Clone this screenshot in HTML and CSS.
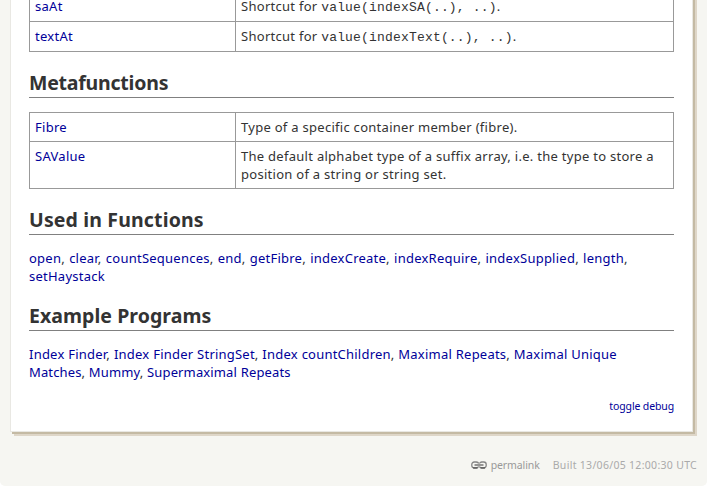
FILE: index.html
```
<!DOCTYPE html>
<html lang="en">
<head>
<meta charset="utf-8">
<title>Index</title>
<link rel="stylesheet" href="styles.css">
</head>
<body>
<div class="page">
  <main class="panel">
    <table class="members first">
      <tr class="code-row"><td class="name"><a>saAt</a></td><td><span class="lead">Shortcut for </span><code>value(indexSA(..), ..)</code>.</td></tr>
      <tr class="code-row"><td class="name"><a>textAt</a></td><td><span class="lead">Shortcut for </span><code>value(indexText(..), ..)</code>.</td></tr>
    </table>
    <h2 class="meta">Metafunctions</h2>
    <table class="members">
      <tr><td class="name"><a>Fibre</a></td><td>Type of a specific container member (fibre).</td></tr>
      <tr><td class="name"><a>SAValue</a></td><td>The default alphabet type of a suffix array, i.e. the type to store a<br>position of a string or string set.</td></tr>
    </table>
    <h2>Used in Functions</h2>
    <p class="functions"><a>open</a>, <a>clear</a>, <a>countSequences</a>, <a>end</a>, <a>getFibre</a>, <a>indexCreate</a>, <a>indexRequire</a>, <a>indexSupplied</a>, <a>length</a>,<br><a>setHaystack</a></p>
    <h2 class="examples">Example Programs</h2>
    <p class="programs"><a>Index Finder</a>, <a>Index Finder StringSet</a>, <a>Index countChildren</a>, <a>Maximal Repeats</a>, <a>Maximal Unique</a><br><span class="tight"><a>Matches</a>, <a>Mummy</a>, <a>Supermaximal Repeats</a></span></p>
    <div class="debug"><a>toggle debug</a></div>
  </main>
  <footer>
    <svg class="chain" width="16" height="8" viewBox="0 0 16 8"><g fill="none"><rect x=".8" y="1" width="6.8" height="6" rx="2.4" stroke="#858585" stroke-width="1.3"/><rect x="8.4" y="1" width="6.8" height="6" rx="2.4" stroke="#858585" stroke-width="1.3"/><path d="M2 6.9h4.5M9.5 6.9H14" stroke="#555" stroke-width="1.1"/><path d="M3.5 4h9" stroke="#f6f6f2" stroke-width="2.8"/><path d="M3.5 4h9" stroke="#555" stroke-width="1.2"/></g></svg>
    <span class="permalink">permalink</span>
    <span class="built">Built 13/06/05 12:00:30 UTC</span>
  </footer>
</div>
</body>
</html>
```
FILE: styles.css
```
* { box-sizing: border-box; }
html { background: #fff; overflow: hidden; }
body { margin: 0; font: 13px/18px "Noto Sans", "Open Sans", sans-serif; letter-spacing: .28px; color: #333; }
.page { height: 486px; overflow: hidden; background: #f6f6f2; border-radius: 0 0 5px 5px; }
.panel {
  width: 683px; height: 442px; margin: -10px 0 0 10px; padding: 0 18px;
  background: #fff; border: 1px solid #e9e8e3;
  box-shadow: 2px 2px 0 #c4baa4, 4px 4px 0 #ded6c8;
}
.members { width: 645px; border-collapse: collapse; table-layout: fixed; }
.members td { border: 1px solid #999; padding: 5px; vertical-align: top; white-space: nowrap; height: 29px; }
.members .code-row td { height: 30px; }
.members .name { width: 206px; }
code { font: 13px/14px "Liberation Mono", monospace; letter-spacing: .18px; }
h2 {
  margin: 19px 0 14px; height: 27px; border-bottom: 1px solid #808080;
  font-size: 19.5px; line-height: 24px; font-weight: 700; white-space: nowrap; letter-spacing: .15px;
}
.meta { letter-spacing: -.22px; }
.examples { letter-spacing: .05px; }
p { margin: 0 0 19px; white-space: nowrap; }
.functions { letter-spacing: .24px; word-spacing: .6px; }
.programs { margin-bottom: 16px; letter-spacing: .22px; word-spacing: .2px; }
.tight { letter-spacing: .13px; }
a { color: #009; }
.debug { text-align: right; font-size: 10.5px; letter-spacing: -.13px; }
footer { display: flex; align-items: center; justify-content: flex-end; margin-top: 24px; padding-right: 10px; font-size: 10.5px; color: #aaa; }
.chain { margin-right: 4px; }
.permalink { color: #999; margin-right: 13px; letter-spacing: -.1px; }
.built { letter-spacing: .3px; }
```
